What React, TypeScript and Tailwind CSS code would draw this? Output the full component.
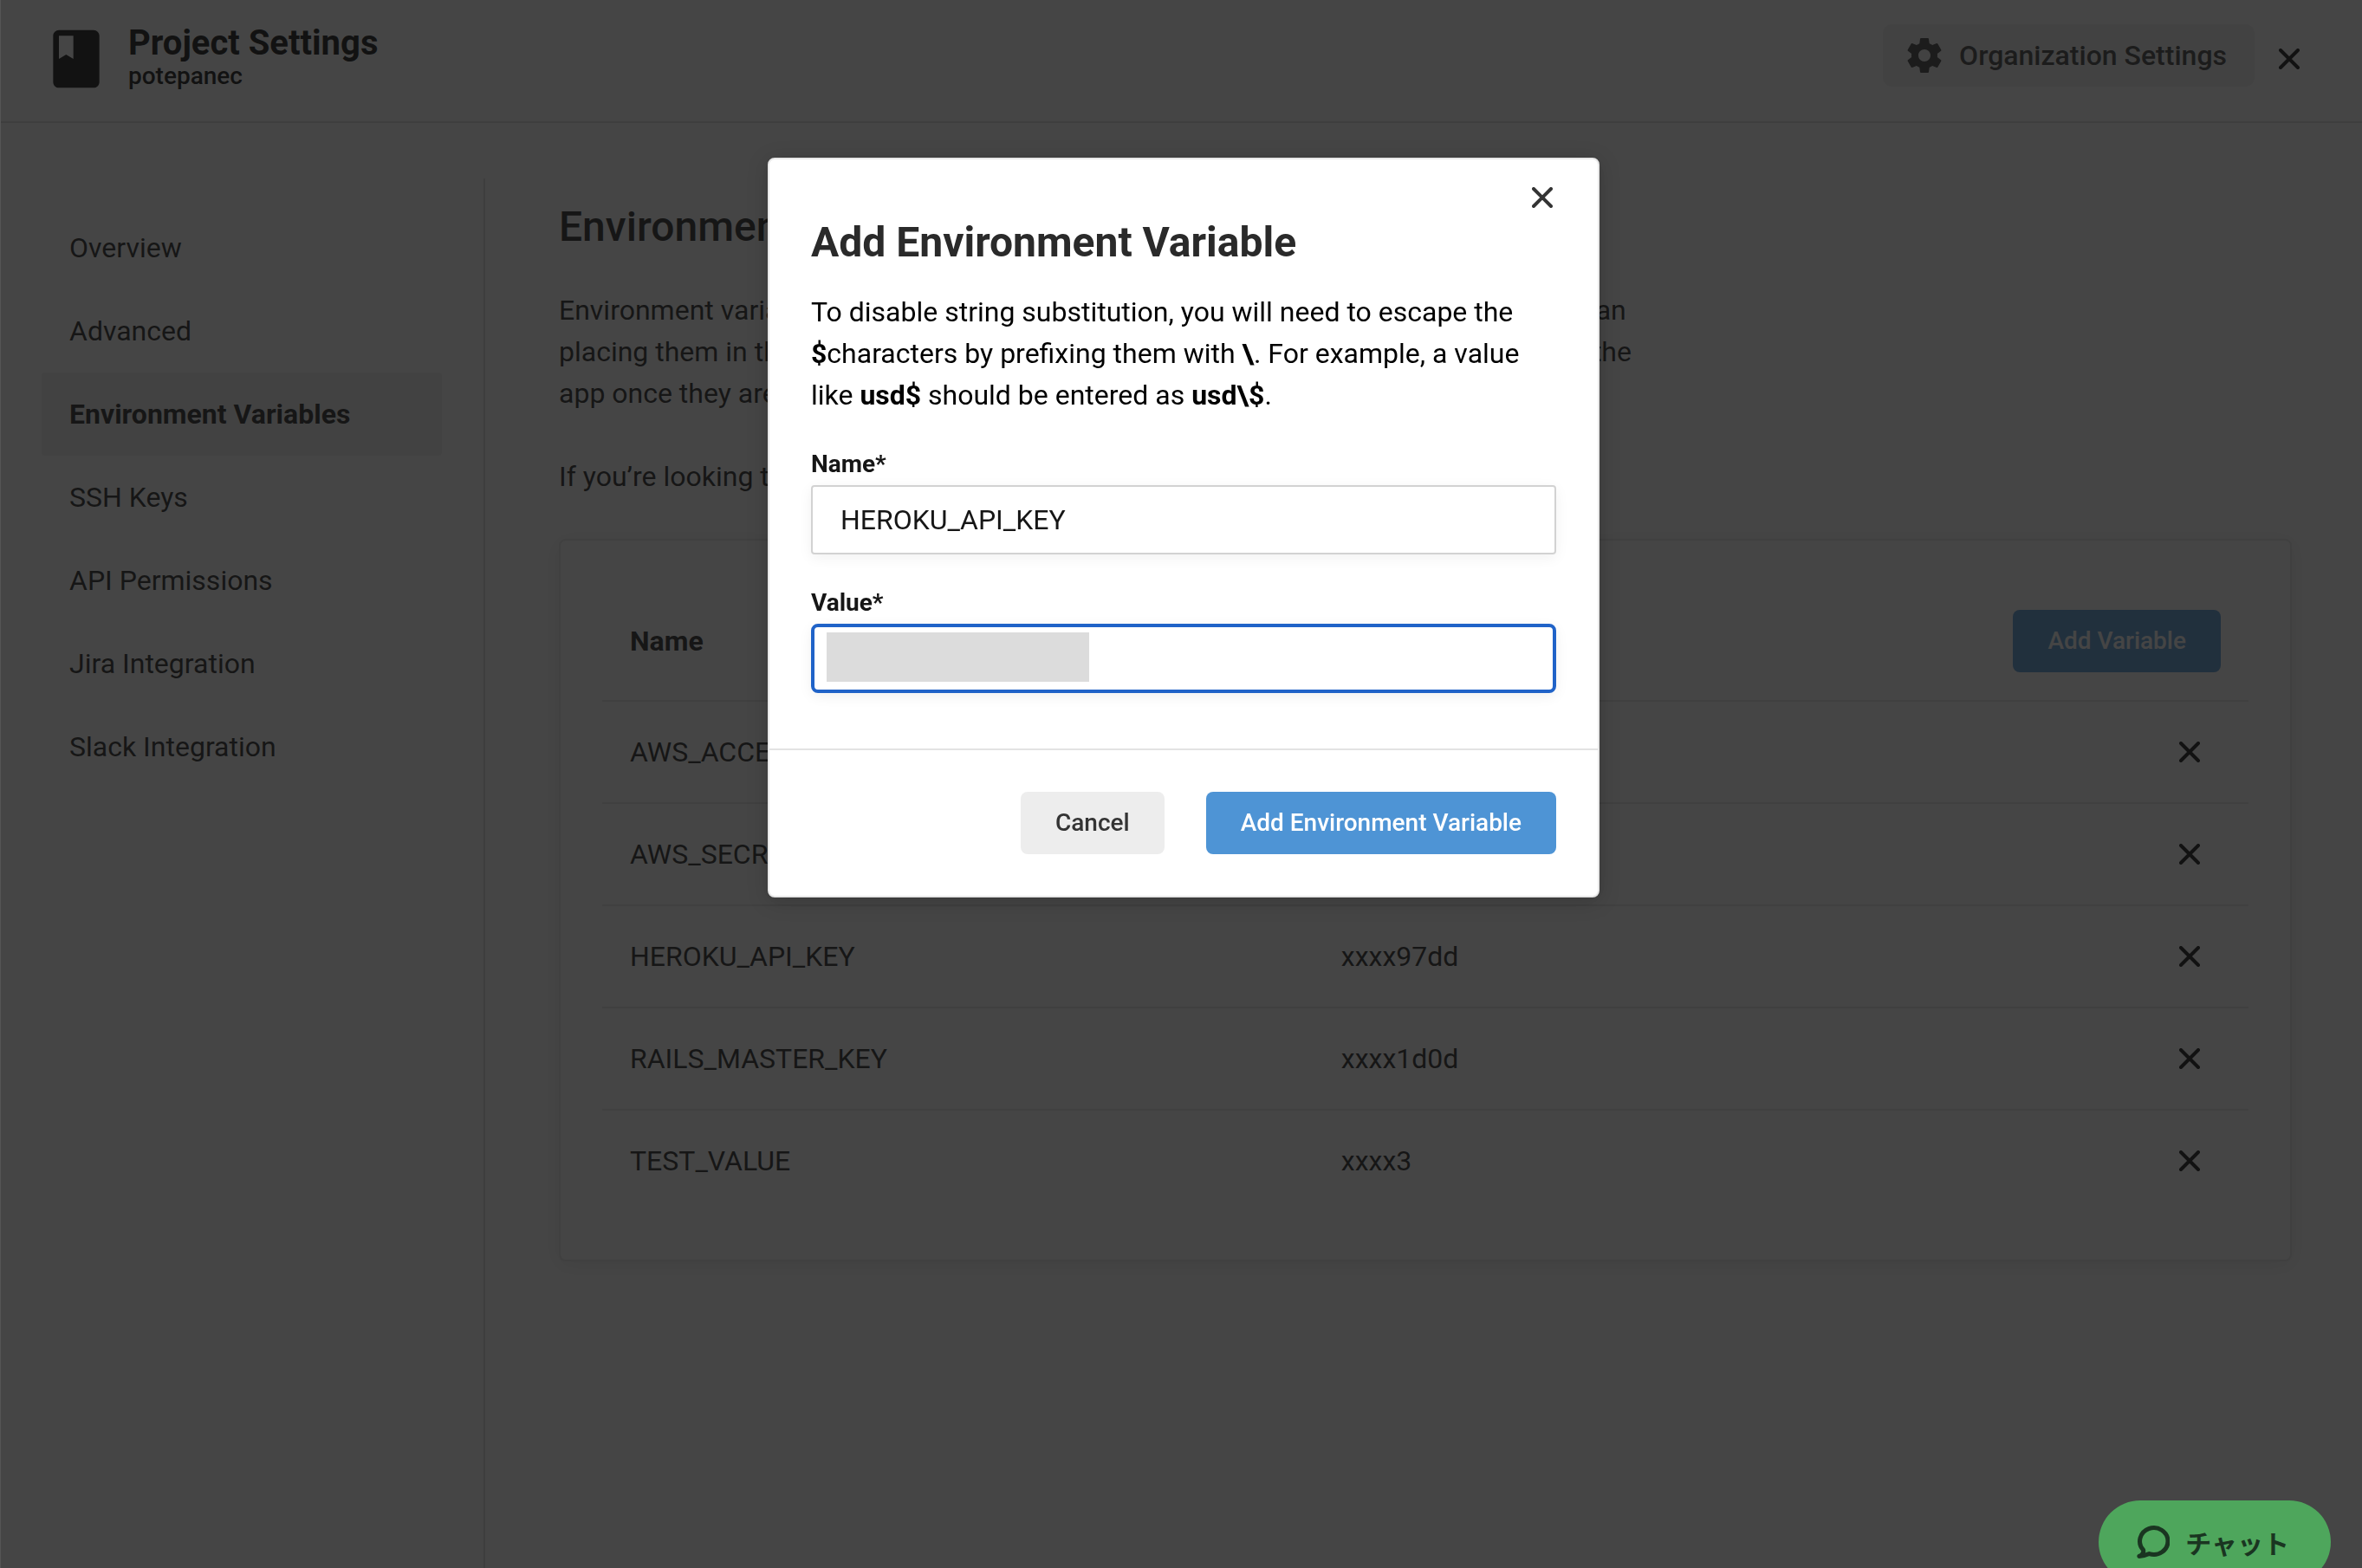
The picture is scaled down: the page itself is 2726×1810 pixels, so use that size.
import React from "react";

const navItems = [
  "Overview",
  "Advanced",
  "Environment Variables",
  "SSH Keys",
  "API Permissions",
  "Jira Integration",
  "Slack Integration",
];

const variables = [
  { name: "AWS_ACCESS_KEY_ID", value: "xxxxQ4XA" },
  { name: "AWS_SECRET_ACCESS_KEY", value: "xxxxk7Tz" },
  { name: "HEROKU_API_KEY", value: "xxxx97dd" },
  { name: "RAILS_MASTER_KEY", value: "xxxx1d0d" },
  { name: "TEST_VALUE", value: "xxxx3" },
];

function CrossIcon() {
  return (
    <svg viewBox="0 0 24 24" className="size-6" aria-hidden="true">
      <path d="M2 2 22 22M22 2 2 22" fill="none" stroke="currentColor" strokeWidth="4" strokeLinecap="round" />
    </svg>
  );
}

function BookIcon() {
  return (
    <svg viewBox="0 0 24 24" className="size-20 text-black" aria-hidden="true">
      <path
        fill="currentColor"
        d="M18 2H6c-1.1 0-2 .9-2 2v16c0 1.1.9 2 2 2h12c1.1 0 2-.9 2-2V4c0-1.1-.9-2-2-2zM6 4h5v8l-2.5-1.5L6 12V4z"
      />
    </svg>
  );
}

function GearIcon() {
  return (
    <svg viewBox="0 0 24 24" className="size-12" aria-hidden="true">
      <path
        fill="currentColor"
        d="M19.43 12.98c.04-.32.07-.64.07-.98s-.03-.66-.07-.98l2.11-1.65c.19-.15.24-.42.12-.64l-2-3.46c-.12-.22-.39-.3-.61-.22l-2.49 1c-.52-.4-1.08-.73-1.69-.98l-.38-2.65C14.46 2.18 14.25 2 14 2h-4c-.25 0-.46.18-.49.42l-.38 2.65c-.61.25-1.17.59-1.69.98l-2.49-1c-.23-.09-.49 0-.61.22l-2 3.46c-.13.22-.07.49.12.64l2.11 1.65c-.04.32-.07.65-.07.98s.03.66.07.98l-2.11 1.65c-.19.15-.24.42-.12.64l2 3.46c.12.22.39.3.61.22l2.49-1c.52.4 1.08.73 1.69.98l.38 2.65c.03.24.24.42.49.42h4c.25 0 .46-.18.49-.42l.38-2.65c.61-.25 1.17-.59 1.69-.98l2.49 1c.23.09.49 0 .61-.22l2-3.46c.12-.22.07-.49-.12-.64l-2.11-1.65zM12 15.5c-1.93 0-3.5-1.57-3.5-3.5s1.57-3.5 3.5-3.5 3.5 1.57 3.5 3.5-1.57 3.5-3.5 3.5z"
      />
    </svg>
  );
}

function ChatIcon() {
  return (
    <svg viewBox="0 0 38 38" className="size-[38px]" aria-hidden="true">
      <path
        d="M7.6 28.2A16.2 15.4 0 1 1 14.5 32.6Q9 35.2 2.8 35.4Q8.6 33 7.6 28.2Z"
        fill="none"
        stroke="currentColor"
        strokeWidth="5"
        strokeLinejoin="round"
      />
    </svg>
  );
}

function Header() {
  return (
    <header className="flex h-[142px] items-start justify-between border-b-2 border-[#dadada] pt-7 pr-[52px] pl-12">
      <div className="flex items-start gap-5">
        <BookIcon />
        <div className="text-black">
          <h1 className="text-[40px] leading-[44px] font-bold">Project Settings</h1>
          <p className="text-[28px] leading-8 font-medium">potepanec</p>
        </div>
      </div>
      <div className="flex items-start gap-2">
        <button
          type="button"
          className="flex h-[72px] items-center gap-4 rounded-[10px] bg-[#f0f0f0] pl-6 pr-8 text-[32px] leading-10 font-medium text-[#343434]"
        >
          <GearIcon />
          Organization Settings
        </button>
        <button type="button" aria-label="Close settings" className="mt-2 flex h-16 w-16 items-center justify-center text-black">
          <CrossIcon />
        </button>
      </div>
    </header>
  );
}

function Sidebar() {
  return (
    <nav className="w-[560px] shrink-0 border-r-2 border-[#dadada] px-12 pt-8">
      <ul>
        {navItems.map((item) => (
          <li key={item}>
            <a
              href="#"
              className={
                item === "Environment Variables"
                  ? "flex h-24 items-center rounded bg-[#f0f0f0] px-8 text-[32px] font-bold text-[#161616]"
                  : "flex h-24 items-center px-8 text-[32px] text-[#161616]"
              }
            >
              {item}
            </a>
          </li>
        ))}
      </ul>
    </nav>
  );
}

function VariablesCard() {
  return (
    <section className="rounded-lg border-2 border-[#e3e3e3] bg-white px-12 pt-12 pb-14 shadow-[0_4px_24px_rgba(0,0,0,0.1)]">
      <table className="w-full border-separate border-spacing-0 text-[32px] leading-[52px]">
        <thead>
          <tr>
            <th className="w-[43.2%] border-b-2 border-[#e3e3e3] px-8 text-left font-bold">Name</th>
            <th className="border-b-2 border-[#e3e3e3] px-8 text-left font-bold">Value</th>
            <th className="border-b-2 border-[#e3e3e3] p-8">
              <button
                type="button"
                className="ml-auto block h-[72px] rounded-lg bg-[#4e94d5] px-10 text-[28px] leading-8 font-medium text-white"
              >
                Add Variable
              </button>
            </th>
          </tr>
        </thead>
        <tbody className="[&>tr:last-child>td]:border-b-0">
          {variables.map((v) => (
            <tr key={v.name}>
              <td className="border-b-2 border-[#e3e3e3] px-8 py-8">{v.name}</td>
              <td className="border-b-2 border-[#e3e3e3] px-8 py-8">{v.value}</td>
              <td className="border-b-2 border-[#e3e3e3] px-8 py-8">
                <button
                  type="button"
                  aria-label={`Delete ${v.name}`}
                  className="ml-auto flex h-[52px] w-[72px] items-center justify-center text-black"
                >
                  <CrossIcon />
                </button>
              </td>
            </tr>
          ))}
        </tbody>
      </table>
    </section>
  );
}

function AddVariableDialog() {
  return (
    <div
      role="dialog"
      aria-modal="true"
      aria-labelledby="dialog-title"
      className="relative w-[960px] rounded-lg border-2 border-[#e8e8e8] bg-white shadow-[0_4px_24px_rgba(0,0,0,0.2)]"
    >
      <button
        type="button"
        aria-label="Close dialog"
        className="absolute top-6 right-11 flex size-10 items-center justify-center text-[#343434]"
      >
        <CrossIcon />
      </button>
      <form onSubmit={(e) => e.preventDefault()}>
        <div className="px-12 pt-16 pb-16">
          <h2 id="dialog-title" className="text-[48px] leading-[64px] font-bold text-[#2a2a2a]">
            Add Environment Variable
          </h2>
          <p className="mt-6 text-[32px] leading-[48px] text-black">
            To disable string substitution, you will need to escape the <b>$</b>characters by prefixing them with{" "}
            <b>\</b>. For example, a value like <b>usd$</b> should be entered as <b>usd\$</b>.
          </p>
          <label htmlFor="variable-name" className="mt-9 mb-1 block text-[28px] leading-10 font-bold">
            Name*
          </label>
          <input
            id="variable-name"
            type="text"
            defaultValue="HEROKU_API_KEY"
            className="block h-20 w-full rounded border-2 border-[#d2d2d2] px-8 text-[32px] leading-10 shadow-[0_4px_16px_rgba(0,0,0,0.06)] outline-none"
          />
          <label htmlFor="variable-value" className="mt-9 mb-1 block text-[28px] leading-10 font-bold">
            Value*
          </label>
          <div className="relative">
            <input
              id="variable-value"
              type="text"
              className="block h-20 w-full rounded-lg border-4 border-[#2063c8] px-8 text-[32px] leading-10 shadow-[0_4px_16px_rgba(0,0,0,0.06)] outline-none"
            />
            <span className="pointer-events-none absolute top-[10px] left-[18px] h-[57px] w-[303px] bg-[#dcdcdc]" />
          </div>
        </div>
        <div className="flex justify-end gap-12 border-t-2 border-[#e3e3e3] p-12">
          <button
            type="button"
            className="h-[72px] rounded-lg bg-[#ededed] px-10 text-[28px] leading-8 font-medium text-[#343434]"
          >
            Cancel
          </button>
          <button
            type="submit"
            className="h-[72px] rounded-lg bg-[#4e94d5] px-10 text-[28px] leading-8 font-medium text-white"
          >
            Add Environment Variable
          </button>
        </div>
      </form>
    </div>
  );
}

export default function App() {
  return (
    <div className="flex h-screen flex-col overflow-hidden bg-white font-['Roboto',sans-serif] text-[#161616]">
      <Header />
      <div className="flex flex-1 pt-16">
        <Sidebar />
        <main className="min-w-0 flex-1 pt-6 pr-[81px] pl-[85px]">
          <h2 className="text-[48px] leading-[64px] font-medium">Environment Variables</h2>
          <div className="mt-10 mb-12 max-w-[1250px] text-[32px] leading-[48px]">
            <p>
              Environment variables let you add sensitive data (e.g. API keys) to your jobs rather than placing them in
              the repository. The value of the variables cannot be read or edited in the app once they are set.
            </p>
            <p className="mt-12">
              If you’re looking to share environment variables across projects, try <a href="#">Contexts</a>.
            </p>
          </div>
          <VariablesCard />
        </main>
      </div>
      <div className="fixed inset-0 flex items-start justify-center border-l border-[#555555] bg-[rgba(22,22,22,0.8)] pt-[182px] pl-[5px]">
        <AddVariableDialog />
      </div>
      <button
        type="button"
        className="fixed right-9 -bottom-[18px] flex h-24 items-center gap-[18px] rounded-full bg-[#4ea65c] pr-12 pl-11 font-['Noto_Sans_CJK_JP',sans-serif] text-[30px] leading-10 font-bold text-[#1a3521]"
      >
        <ChatIcon />
        チャット
      </button>
    </div>
  );
}
